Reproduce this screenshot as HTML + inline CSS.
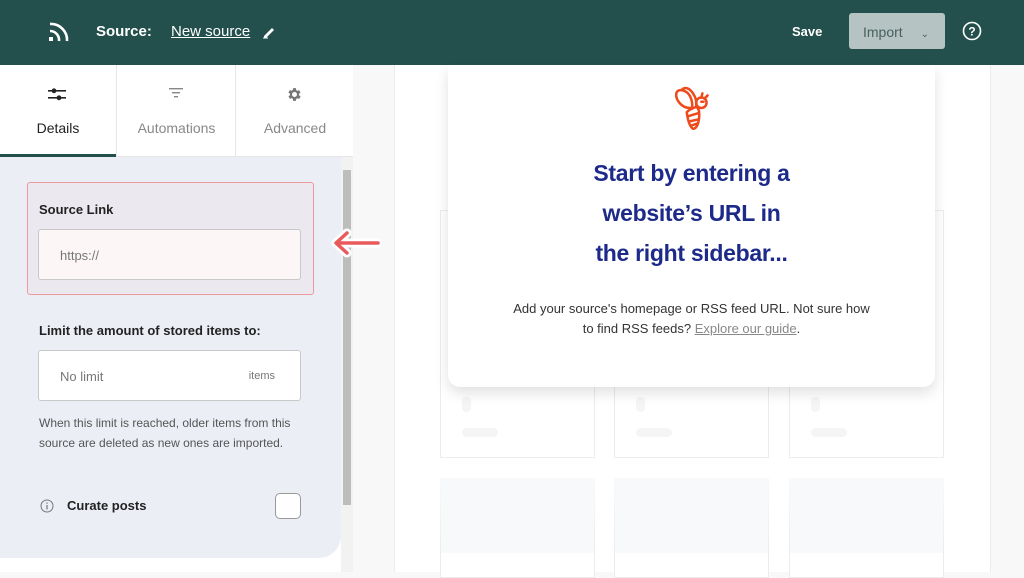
<!DOCTYPE html>
<html><head><meta charset="utf-8"><style>
*{box-sizing:border-box;margin:0;padding:0}
body{width:1024px;height:572px;overflow:hidden;font-family:"Liberation Sans",sans-serif;background:#f8f8f8;position:relative}
.hdr{position:absolute;left:0;top:0;width:1024px;height:65px;background:#23504d;color:#fff}
.abs{position:absolute}
.left{position:absolute;left:0;top:65px;width:353px;height:507px;background:#fff}
.tabs{position:absolute;left:0;top:0;width:353px;height:92px;background:#fff;border-bottom:1px solid #e6e6e6}
.tab{position:absolute;top:0;height:92px;text-align:center;font-size:14px;color:#888}
.panel{position:absolute;left:0;top:92px;width:341px;height:401px;background:#eceef6;border-bottom-right-radius:22px}
.lbl{font-size:13px;font-weight:bold;color:#222}
.inp{position:absolute;border:1px solid #c8c8c8;border-radius:3px;background:#fff;font-size:13px;color:#777}
.sk{position:absolute;border:1px solid #ececec;background:#fff}
</style></head><body>
<div class="hdr">
<svg class="abs" style="left:47px;top:20px" width="26" height="24" viewBox="0 0 26 24"><rect x="2" y="17" width="4" height="4" fill="#fff"/><path d="M3 11a9 9 0 0 1 9 10M3 4a16 16 0 0 1 17 17" stroke="#fff" stroke-width="2.6" fill="none"/></svg>
<div class="abs" style="left:96px;top:23px;font-size:15px;font-weight:bold">Source:</div>
<div class="abs" style="left:171px;top:23px;font-size:15px;text-decoration:underline">New source</div>
<svg class="abs" style="left:262px;top:25px" width="14" height="14" viewBox="0 0 14 14"><path d="M2 11L10 3l2 2-8 8H2z" fill="#fff"/><rect x="1" y="12.5" width="5" height="1" fill="#fff"/></svg>
<div class="abs" style="left:792px;top:24px;font-size:13px;font-weight:bold">Save</div>
<div class="abs" style="left:849px;top:13px;width:96px;height:36px;background:#b5c3c2;border-radius:3px;color:#4a605f;font-size:14px;padding:11px 0 0 14px">Import <span style="margin-left:14px;font-size:10px">&#8964;</span></div>
<svg class="abs" style="left:962px;top:21px" width="20" height="20" viewBox="0 0 20 20"><circle cx="10" cy="10" r="8.5" stroke="#fff" stroke-width="1.6" fill="none"/><text x="10" y="14.5" text-anchor="middle" font-size="12" font-weight="bold" fill="#fff" font-family="Liberation Sans">?</text></svg>
</div>
<div class="left">
<div class="tabs">
<div class="tab" style="left:0;width:116px;color:#222;border-bottom:3px solid #23504d">
<svg class="abs" style="left:48px;top:22px" width="18" height="14" viewBox="0 0 18 14"><rect x="0" y="3" width="18" height="1.6" fill="#222"/><rect x="0" y="10" width="18" height="1.6" fill="#222"/><circle cx="6" cy="3.8" r="2.4" fill="#222"/><circle cx="11" cy="10.8" r="2.4" fill="#222"/></svg>
<div class="abs" style="left:0;width:116px;top:55px">Details</div></div>
<div class="tab" style="left:116px;width:119px;border-left:1px solid #e6e6e6">
<svg class="abs" style="left:51px;top:22px" width="16" height="14" viewBox="0 0 16 14"><rect x="1" y="1" width="14" height="1.4" fill="#888"/><rect x="4" y="5" width="8" height="1.4" fill="#888"/><rect x="6" y="9" width="4" height="1.4" fill="#888"/></svg>
<div class="abs" style="left:0;width:119px;top:55px">Automations</div></div>
<div class="tab" style="left:235px;width:118px;border-left:1px solid #e6e6e6">
<svg class="abs" style="left:50px;top:21px" width="17" height="17" viewBox="0 0 24 24"><path fill="#777" d="M19.4 13a7.5 7.5 0 0 0 0-2l2.1-1.6-2-3.5-2.5 1a7 7 0 0 0-1.7-1L15 3h-4l-.4 2.7a7 7 0 0 0-1.7 1l-2.5-1-2 3.5L6.6 11a7.5 7.5 0 0 0 0 2l-2.1 1.6 2 3.5 2.5-1a7 7 0 0 0 1.7 1L11 21h4l.4-2.7a7 7 0 0 0 1.7-1l2.5 1 2-3.5zM13 15.5a3.5 3.5 0 1 1 0-7 3.5 3.5 0 0 1 0 7z" transform="translate(-1 0)"/></svg>
<div class="abs" style="left:0;width:118px;top:55px">Advanced</div></div>
</div>
<div class="panel">
<div class="abs" style="left:27px;top:25px;width:287px;height:113px;border:1px solid #ec9a9e;border-radius:3px;background:#ece8ef"></div>
<div class="abs lbl" style="left:39px;top:45px">Source Link</div>
<div class="inp" style="left:38px;top:72px;width:263px;height:51px;background:#fcf6f6;padding:18px 0 0 21px">https://</div>
<div class="abs lbl" style="left:39px;top:166px">Limit the amount of stored items to:</div>
<div class="inp" style="left:38px;top:193px;width:263px;height:51px;padding:18px 0 0 21px">No limit<span style="position:absolute;right:25px;top:19px;font-size:11px">items</span></div>
<div class="abs" style="left:39px;top:256px;font-size:12px;color:#555;line-height:20px">When this limit is reached, older items from this<br>source are deleted as new ones are imported.</div>
<svg class="abs" style="left:40px;top:342px" width="14" height="14" viewBox="0 0 14 14"><circle cx="7" cy="7" r="6" stroke="#777" fill="none"/><rect x="6.4" y="6" width="1.2" height="4.5" fill="#777"/><rect x="6.4" y="3.5" width="1.2" height="1.3" fill="#777"/></svg>
<div class="abs lbl" style="left:67px;top:341px">Curate posts</div>
<div class="abs" style="left:275px;top:336px;width:26px;height:26px;border:1px solid #999;border-radius:5px;background:#fff"></div>
</div>
<div class="abs" style="left:341px;top:92px;width:12px;height:415px;background:#f2f2f2"></div>
<div class="abs" style="left:343px;top:105px;width:8px;height:335px;background:#bdbdbd"></div>
</div>
<svg class="abs" style="left:328px;top:228px" width="54" height="30" viewBox="0 0 54 30"><path d="M50 15H9M19 5L8 15l11 10" stroke="#fff" stroke-width="9" fill="none" stroke-linecap="round" stroke-linejoin="round"/><path d="M50 15H9M19 5L8 15l11 10" stroke="#e85a5c" stroke-width="3.5" fill="none" stroke-linecap="round" stroke-linejoin="round"/></svg>
<div class="abs" style="left:394px;top:65px;width:597px;height:507px;background:#fff;border-left:1px solid #ececec;border-right:1px solid #ececec"></div>
<div class="sk" style="left:440px;top:210px;width:155px;height:248px"></div>
<div class="sk" style="left:614px;top:210px;width:155px;height:248px"></div>
<div class="sk" style="left:789px;top:210px;width:155px;height:248px"></div>
<div class="abs" style="left:462px;top:397px;width:9px;height:15px;background:#f5f5f5;border-radius:4px"></div>
<div class="abs" style="left:636px;top:397px;width:9px;height:15px;background:#f5f5f5;border-radius:4px"></div>
<div class="abs" style="left:811px;top:397px;width:9px;height:15px;background:#f5f5f5;border-radius:4px"></div>
<div class="abs" style="left:462px;top:428px;width:36px;height:9px;background:#f5f5f5;border-radius:5px"></div>
<div class="abs" style="left:636px;top:428px;width:36px;height:9px;background:#f5f5f5;border-radius:5px"></div>
<div class="abs" style="left:811px;top:428px;width:36px;height:9px;background:#f5f5f5;border-radius:5px"></div>
<div class="sk" style="left:440px;top:478px;width:155px;height:100px;border-top:75px solid #f8f9fa"></div>
<div class="sk" style="left:614px;top:478px;width:155px;height:100px;border-top:75px solid #f8f9fa"></div>
<div class="sk" style="left:789px;top:478px;width:155px;height:100px;border-top:75px solid #f8f9fa"></div>
<div class="abs" style="left:448px;top:65px;width:487px;height:322px;background:#fff;border-radius:0 0 12px 12px;box-shadow:0 6px 14px rgba(0,0,0,0.12);text-align:center">
<svg class="abs" style="left:224px;top:20px" width="42" height="48" viewBox="0 0 38 46"><g stroke="#ee4a1b" stroke-width="2.4" fill="none" stroke-linecap="round" stroke-linejoin="round"><path d="M16 22C8 22 2 14 3 8c1-4 6-4 10-1 4 3 6 10 5 15z"/><path d="M8 5c3-4 8-2 11 3 2 3 4 8 3 13"/><path d="M22 21c-3 1-6 2-9 5 1 8 3 14 6 16 4 0 6-7 6-14 0-3-1-6-3-7z"/><path d="M14 30l10-3M15 35l9-2M17 39l6-2"/><circle cx="27" cy="17" r="5"/><path d="M27 12l1-4M30 13l3-3"/><path d="M27 16h2"/></g></svg>
<div style="position:absolute;left:0;width:487px;top:88px;font-size:23px;font-weight:bold;color:#1d2a8a;line-height:40px;letter-spacing:-0.3px">Start by entering a<br>website’s URL in<br>the right sidebar...</div>
<div style="position:absolute;left:0;width:487px;top:234px;font-size:13px;color:#333;line-height:20px">Add your source's homepage or RSS feed URL. Not sure how<br>to find RSS feeds? <span style="color:#888;text-decoration:underline">Explore our guide</span>.</div>
</div>
</body></html>
